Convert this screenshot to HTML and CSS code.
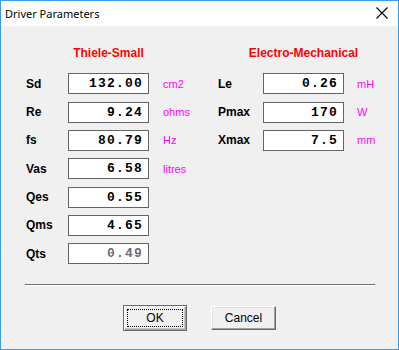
FILE: index.html
```html
<!DOCTYPE html>
<html>
<head>
<meta charset="utf-8">
<link rel="stylesheet" href="styles.css">
</head>
<body>
<div class="window">
  <div class="titlebar">
    <span class="title">Driver Parameters</span>
    <svg class="close" width="12" height="12" viewBox="0 0 12 12"><path d="M0.5 0.5 L11.5 11.5 M11.5 0.5 L0.5 11.5" stroke="#000" stroke-width="1.1" fill="none"/></svg>
  </div>
  <div class="body">
    <div class="panels">
      <div class="panel left">
        <div class="head">Thiele-Small</div>
        <div class="lbl">Sd</div><div class="box">132.00</div><div class="unit">cm2</div>
        <div class="lbl">Re</div><div class="box">9.24</div><div class="unit">ohms</div>
        <div class="lbl">fs</div><div class="box">80.79</div><div class="unit">Hz</div>
        <div class="lbl">Vas</div><div class="box">6.58</div><div class="unit">litres</div>
        <div class="lbl">Qes</div><div class="box">0.55</div><div class="unit"></div>
        <div class="lbl">Qms</div><div class="box">4.65</div><div class="unit"></div>
        <div class="lbl">Qts</div><div class="box disabled">0.49</div><div class="unit"></div>
      </div>
      <div class="panel right">
        <div class="head">Electro-Mechanical</div>
        <div class="lbl">Le</div><div class="box">0.26</div><div class="unit">mH</div>
        <div class="lbl">Pmax</div><div class="box">170</div><div class="unit">W</div>
        <div class="lbl">Xmax</div><div class="box">7.5</div><div class="unit">mm</div>
      </div>
    </div>
    <div class="sep"></div>
    <div class="buttons">
      <div class="btn default"><span class="focus">OK</span></div>
      <div class="btn">Cancel</div>
    </div>
  </div>
</div>
</body>
</html>
```

FILE: styles.css
```css
html, body {
  margin: 0;
  padding: 0;
  background: #f0f0f0;
}
.window {
  width: 399px;
  height: 350px;
  box-sizing: border-box;
  border: 1px solid #3b9de9;
  background: #f0f0f0;
  display: flex;
  flex-direction: column;
}
.titlebar {
  height: 25px;
  background: #ffffff;
  display: flex;
  align-items: center;
  justify-content: space-between;
  padding: 0 10px 0 4px;
  font-family: "Noto Sans", "Open Sans", sans-serif;
  font-size: 11px;
  color: #000;
}
.title {
  margin-top: -1px;
}
.close {
  display: block;
  margin-top: -1px;
}
.body {
  flex: 1;
}
.panels {
  display: flex;
  padding: 20px 0 0 25px;
}
.panel {
  display: grid;
  grid-template-rows: 20px;
  grid-auto-rows: 21px;
  row-gap: 7.33px;
  align-items: center;
}
.panel.left {
  width: 192px;
  grid-template-columns: 42px 81px auto;
}
.panel.right {
  grid-template-columns: 45px 81px auto;
}
.head {
  grid-column: 2;
  justify-self: center;
  white-space: nowrap;
  color: #ff0000;
  font-family: "Liberation Sans", Arial, sans-serif;
  font-weight: bold;
  font-size: 12px;
  align-self: start;
}
.lbl {
  grid-column: 1;
  font-family: "Liberation Sans", Arial, sans-serif;
  font-weight: bold;
  font-size: 12px;
  color: #000;
}
.box {
  grid-column: 2;
  height: 21px;
  box-sizing: border-box;
  border: 1px solid #646464;
  background: #fff;
  font-family: "Liberation Mono", "Courier New", monospace;
  font-weight: bold;
  font-size: 13px;
  letter-spacing: 1.2px;
  text-align: right;
  padding-right: 5px;
  line-height: 19px;
  color: #000;
}
.box.disabled {
  color: #6d6d6d;
}
.unit {
  grid-column: 3;
  font-family: "Liberation Sans", Arial, sans-serif;
  font-size: 11px;
  color: #ff00ff;
  padding-left: 14px;
}
.right .unit {
  padding-left: 13px;
}
.sep {
  margin: 20px 23px 0 24px;
  height: 1px;
  background: #6e6e6e;
  border-bottom: 1px solid #ffffff;
}
.buttons {
  display: flex;
  gap: 24px;
  padding-left: 122px;
  margin-top: 19px;
  align-items: center;
}
.btn {
  box-sizing: border-box;
  width: 65px;
  height: 24px;
  background: #f0f0f0;
  border-top: 1px solid #ffffff;
  border-left: 1px solid #ffffff;
  border-right: 1px solid #696969;
  border-bottom: 1px solid #696969;
  box-shadow: inset -1px -1px 0 #a0a0a0, inset 1px 1px 0 #e3e3e3;
  font-family: "Liberation Sans", Arial, sans-serif;
  font-size: 12px;
  color: #000;
  display: flex;
  align-items: center;
  justify-content: center;
}
.btn.default {
  width: 64px;
  height: 26px;
  border: 1px solid #696969;
  box-shadow: inset 1px 1px 0 #ffffff, inset -1px -1px 0 #a0a0a0, inset -2px -2px 0 #c8c8c8;
  padding: 3px;
}
.focus {
  flex: 1;
  align-self: stretch;
  border: 1px dotted #000;
  display: flex;
  align-items: center;
  justify-content: center;
}
```
